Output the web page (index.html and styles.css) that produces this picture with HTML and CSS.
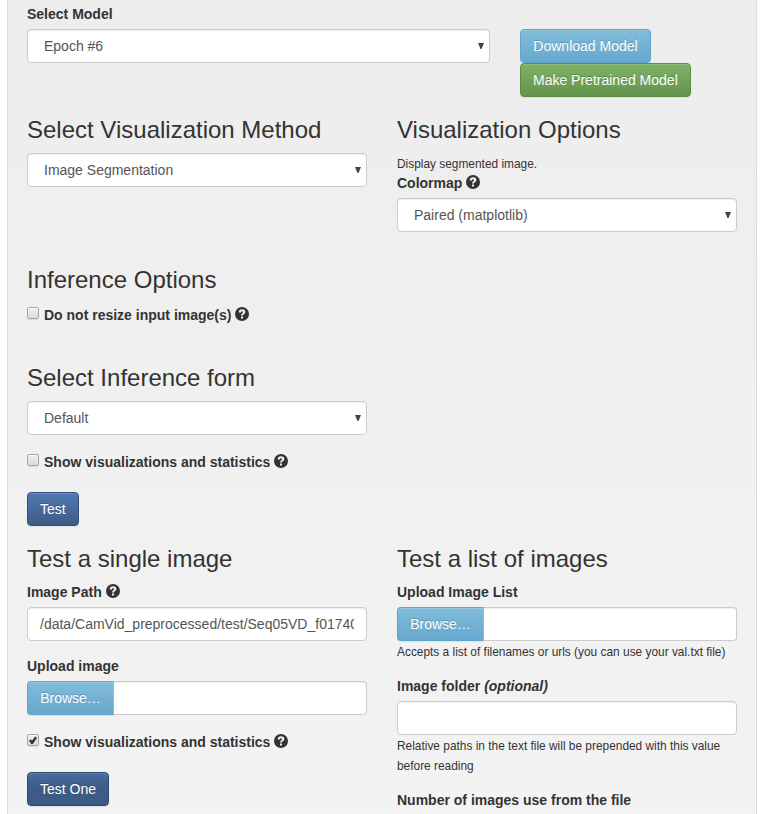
FILE: index.html
```
<!DOCTYPE html>
<html lang="en">
<head>
<meta charset="utf-8">
<title>Model inference</title>
<link rel="stylesheet" href="styles.css">
</head>
<body>
<svg width="0" height="0" class="defs">
  <symbol id="help" viewBox="0 0 14 14">
    <circle cx="7" cy="7" r="7" fill="#333"/>
    <path d="M3.7 5.4C3.7 3.2 5 2.2 7.1 2.2s3.3 1 3.3 2.8c0 2.1-2.4 1.9-2.4 3.5H6c0-2 2-2.2 2-3.3 0-.6-.4-.9-.9-.9-.8 0-1.1.4-1.1 1.1zM6 9.5h2v2H6z" fill="#f2f2f2"/>
  </symbol>
  <symbol id="arrow" viewBox="0 0 6 6"><path d="M0 0h6L3.5 6h-1z" fill="#444"/></symbol>
</svg>
<main class="well">
  <div class="model-row">
    <div>
      <label class="label">Select Model</label>
      <div class="select"><select><option>Epoch #6</option></select><svg class="arrow"><use href="#arrow"/></svg></div>
    </div>
    <div class="model-actions">
      <button class="btn info download">Download Model</button>
      <button class="btn success">Make Pretrained Model</button>
    </div>
  </div>

  <div class="columns">
    <section>
      <h3>Select Visualization Method</h3>
      <div class="select"><select><option>Image Segmentation</option></select><svg class="arrow"><use href="#arrow"/></svg></div>
    </section>
    <section>
      <h3>Visualization Options</h3>
      <p><small>Display segmented image.</small></p>
      <label class="label">Colormap <svg class="help"><use href="#help"/></svg></label>
      <div class="select"><select><option>Paired (matplotlib)</option></select><svg class="arrow"><use href="#arrow"/></svg></div>
    </section>
  </div>

  <section class="options">
    <h3>Inference Options</h3>
    <label class="check"><input type="checkbox"><span>Do not resize input image(s) <svg class="help"><use href="#help"/></svg></span></label>
  </section>

  <section class="form">
    <h3>Select Inference form</h3>
    <div class="select"><select><option>Default</option></select><svg class="arrow"><use href="#arrow"/></svg></div>
    <label class="check"><input type="checkbox"><span>Show visualizations and statistics <svg class="help"><use href="#help"/></svg></span></label>
    <button class="btn primary">Test</button>
  </section>

  <div class="columns">
    <section class="single">
      <h3>Test a single image</h3>
      <label class="label">Image Path <svg class="help"><use href="#help"/></svg></label>
      <input class="control" type="text" value="/data/CamVid_preprocessed/test/Seq05VD_f01740.png">
      <label class="label spaced">Upload image</label>
      <div class="file"><button class="btn info">Browse…</button><input class="control" type="text"></div>
      <label class="check"><input type="checkbox" checked><span>Show visualizations and statistics <svg class="help"><use href="#help"/></svg></span></label>
      <button class="btn primary active">Test One</button>
    </section>
    <section>
      <h3>Test a list of images</h3>
      <label class="label">Upload Image List</label>
      <div class="file"><button class="btn info">Browse…</button><input class="control" type="text"></div>
      <p><small>Accepts a list of filenames or urls (you can use your val.txt file)</small></p>
      <label class="label spaced">Image folder <em>(optional)</em></label>
      <input class="control" type="text">
      <p><small>Relative paths in the text file will be prepended with this value before reading</small></p>
      <label class="label spaced">Number of images use from the file</label>
    </section>
  </div>
</main>
</body>
</html>
```
FILE: styles.css
```
* { box-sizing: border-box; }
html, body { height: 100%; }
body {
  margin: 0;
  overflow: hidden;
  background: #fff;
  color: #333;
  font: 14px/20px "Liberation Sans", Arial, sans-serif;
}
.defs { position: absolute; }
.well {
  width: 750px;
  height: 814px;
  margin-left: 7px;
  padding: 4.4px 19px 0;
  overflow: hidden;
  border: solid #dcdcdc;
  border-width: 0 1px;
  background: linear-gradient(#ededed, #f3f3f3);
}
h3 { margin: 20px 0 10px; font-size: 24px; font-weight: 400; line-height: 26.4px; }
p { margin: 0; }
small { font-size: 85%; line-height: 1; }
.label { display: block; margin-bottom: 5px; font-weight: 700; }
.spaced { margin-top: 15px; }
.help { width: 14px; height: 14px; vertical-align: -1px; }
.model-row { display: grid; grid-template-columns: 463px 1fr; gap: 30px; height: 92.6px; }
.model-actions { display: flex; flex-direction: column; align-items: flex-start; padding-top: 25px; }
.columns { display: grid; grid-template-columns: 340px 340px; gap: 30px; }

.select { display: grid; align-items: center; }
.select select, .arrow { grid-area: 1 / 1; }
.arrow { justify-self: end; width: 6px; height: 6px; margin-right: 6px; pointer-events: none; }
.select select, .control {
  width: 100%;
  height: 34px;
  margin: 0;
  padding: 6px 12px;
  border: 1px solid #ccc;
  border-radius: 4px;
  background: #fff;
  color: #555;
  font: inherit;
  box-shadow: inset 0 1px 1px rgba(0, 0, 0, .075);
}
.select select { appearance: none; padding-left: 16px; }
.control { display: block; }

.btn {
  height: 34px;
  padding: 6px 12px;
  border: 1px solid;
  border-radius: 4px;
  color: #fff;
  font: inherit;
  white-space: nowrap;
  text-shadow: 0 -1px 0 rgba(0, 0, 0, .2);
  box-shadow: inset 0 1px 0 rgba(255, 255, 255, .15), 0 1px 1px rgba(0, 0, 0, .075);
}
.info { background: linear-gradient(#82bcd9, #66a8cf); border-color: #5fa4ca; }
.download { width: 131px; }
.success { background: linear-gradient(#7fb366, #64934c); border-color: #5c8d45; }
.primary { background: linear-gradient(#5079b3, #3e5b86); border-color: #35507a; }
.primary.active { background: linear-gradient(#486b9f, #3e5b86 50%); border-color: #304a71; }

.file { display: flex; }
.file .btn { width: 87px; flex: none; border-radius: 4px 0 0 4px; border-right-color: #8fbdd3; }
.file .control { border-left: 0; border-radius: 0 4px 4px 0; }

.check { display: flex; align-items: flex-start; gap: 5px; font-weight: 700; }
.check input {
  appearance: none;
  position: relative;
  width: 12px;
  height: 12px;
  margin: 2px 0 0;
  border: 1px solid #a5a5a5;
  border-radius: 2px;
  background: linear-gradient(#ededed, #dcdcdc);
  box-shadow: 0 1px 0 rgba(0, 0, 0, .08), inset 0 1px 1px #fff;
}
.check input:checked::after {
  content: "";
  position: absolute;
  left: 1px;
  top: 1px;
  width: 8px;
  height: 8px;
  background: #333;
  clip-path: polygon(0 55%, 20% 36%, 38% 55%, 76% 0, 100% 16%, 44% 100%, 32% 100%);
}
.options { height: 112.6px; padding-top: 15px; }
.options .check { margin-top: 11px; }
.form { width: 340px; height: 161px; }
.form .check, .single .check { margin: 17px 0 20px; }
.form .btn, .single > .btn { display: block; }
```
